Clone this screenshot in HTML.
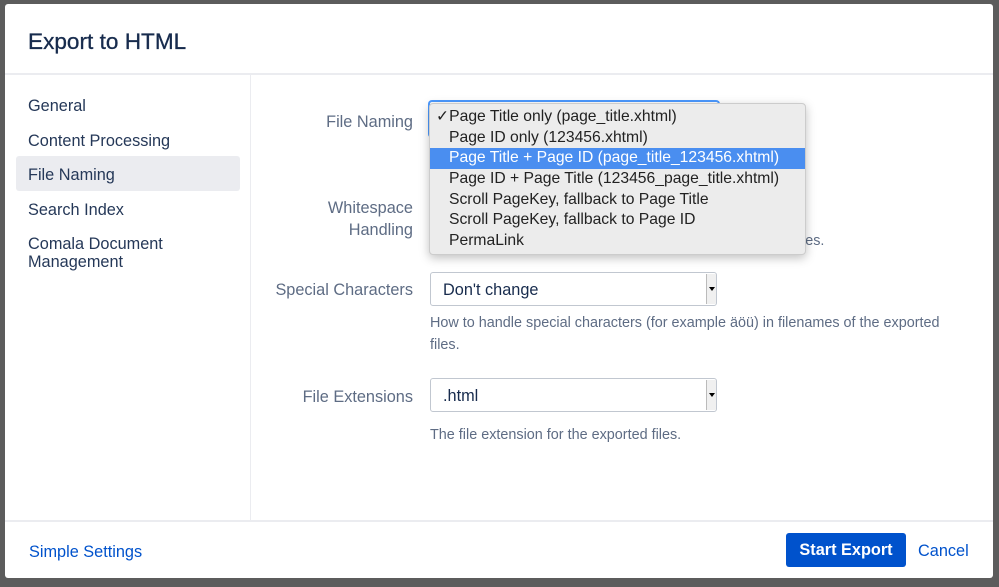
<!DOCTYPE html>
<html><head><meta charset="utf-8"><style>
*{box-sizing:border-box;margin:0;padding:0}
body{width:999px;height:587px;background:#5c5c5c;font-family:"Liberation Sans",sans-serif;position:relative;overflow:hidden}
.dlg{position:absolute;left:5px;top:4px;width:988px;height:574px;background:#fff;border-radius:3px}
.abs{position:absolute;white-space:nowrap}
h1{position:absolute;left:23px;top:25px;font-size:22.6px;font-weight:normal;color:#172b4d;-webkit-text-stroke:0.3px #172b4d}
.hl{position:absolute;background:#ebecf0}
.nav{font-size:16.3px;color:#253858}
.lbl{font-size:16.3px;color:#5e6c84;text-align:right;width:150px}
.sel{position:absolute;height:34px;border:1px solid #c1c7d0;border-radius:3px;background:#fff;font-size:16.3px;color:#172b4d;padding:8px 12px}
.sel .ar{position:absolute;right:0;top:1px;width:10px;height:30px;background:#f0f0f0;border-left:1px solid #bbb}
.sel .ar:after{content:"";position:absolute;left:2px;top:13px;border:3px solid transparent;border-top:4px solid #000}
.help{font-size:14.4px;color:#5e6c84;line-height:22px}
.menu{position:absolute;left:429px;top:103px;width:377px;height:152px;background:#ececec;border:1px solid #ccc;border-radius:4px;box-shadow:0 3px 10px rgba(0,0,0,.25);font-size:15.7px;color:#222}
.menu div{height:20.7px;line-height:20.7px;padding-left:19px;white-space:nowrap}
.menu .on{background:#4a8ef0;color:#fff}
</style></head><body>
<div class="dlg">
<h1>Export to HTML</h1>
<div class="abs" style="left:0;top:69px;width:988px;height:2px;background:#ebecf0"></div>
<div class="abs" style="left:245px;top:71px;width:1px;height:446px;background:#ebecf0"></div>
<div class="abs" style="left:0;top:516px;width:988px;height:2px;background:#ebecf0"></div>
<div class="hl" style="left:11px;top:152px;width:224px;height:35px;border-radius:3px"></div>
<div class="abs nav" style="left:23px;top:93px">General</div>
<div class="abs nav" style="left:23px;top:128px">Content Processing</div>
<div class="abs nav" style="left:23px;top:162px">File Naming</div>
<div class="abs nav" style="left:23px;top:197px">Search Index</div>
<div class="abs nav" style="left:23px;top:231px;line-height:18px">Comala Document<br>Management</div>

<div class="abs lbl" style="left:258px;top:109px">File Naming</div>
<div class="abs lbl" style="left:258px;top:193px;line-height:22px">Whitespace<br>Handling</div>
<div class="abs help" style="left:797px;top:226px">les.</div>
<div class="abs lbl" style="left:258px;top:277px">Special Characters</div>
<div class="sel" style="left:425px;top:268px;width:287px">Don't change<span class="ar"></span></div>
<div class="abs help" style="left:425px;top:308px">How to handle special characters (for example äöü) in filenames of the exported<br>files.</div>
<div class="abs lbl" style="left:258px;top:384px">File Extensions</div>
<div class="sel" style="left:425px;top:374px;width:287px">.html<span class="ar"></span></div>
<div class="abs help" style="left:425px;top:420px">The file extension for the exported files.</div>
<div class="abs" style="left:423px;top:96px;width:292px;height:38px;border:2px solid #4c9aff;border-radius:4px;border-bottom:none"></div>

<div class="abs" style="left:24px;top:539px;font-size:16.3px;color:#0052cc">Simple Settings</div>
<div class="abs" style="left:781px;top:529px;width:120px;height:34px;background:#0052cc;border-radius:3px;color:#fff;font-size:16.3px;font-weight:bold;text-align:center;line-height:34px">Start Export</div>
<div class="abs" style="left:913px;top:538px;font-size:16.3px;color:#0052cc">Cancel</div>
</div>
<div class="menu" style="padding-top:3px">
<div style="padding-left:6px">✓Page Title only (page_title.xhtml)</div>
<div>Page ID only (123456.xhtml)</div>
<div class="on">Page Title + Page ID (page_title_123456.xhtml)</div>
<div>Page ID + Page Title (123456_page_title.xhtml)</div>
<div>Scroll PageKey, fallback to Page Title</div>
<div>Scroll PageKey, fallback to Page ID</div>
<div>PermaLink</div>
</div>
</body></html>
